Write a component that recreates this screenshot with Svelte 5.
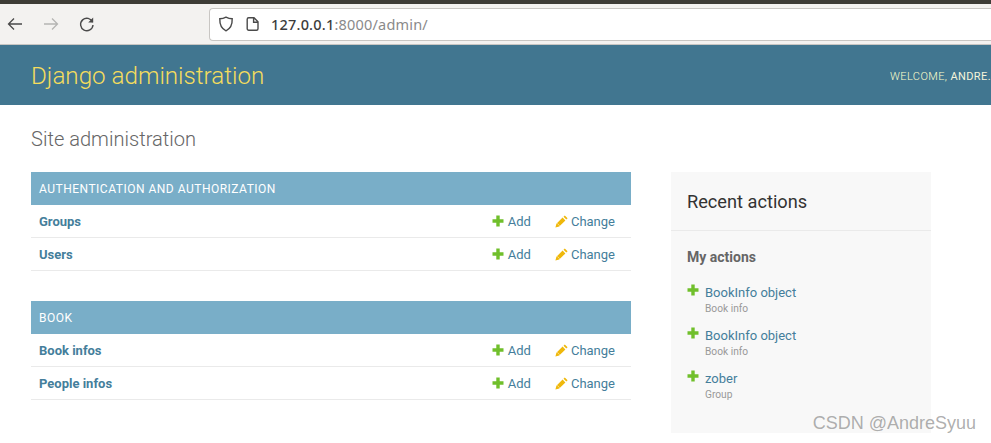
<script>
	const sections = [
		{ title: 'Authentication and Authorization', rows: ['Groups', 'Users'] },
		{ title: 'Book', rows: ['Book infos', 'People infos'] }
	];
	const actions = [
		{ name: 'BookInfo object', type: 'Book info' },
		{ name: 'BookInfo object', type: 'Book info' },
		{ name: 'zober', type: 'Group' }
	];
</script>

{#snippet plus()}
	<svg class="icon" width="12" height="12" viewBox="0 0 12 12">
		<path d="M4.300 0.500h3.400v3.800h3.800v3.400H7.700v3.800H4.300V7.700H0.500V4.300h3.800z" fill="#70bf2b" />
	</svg>
{/snippet}

{#snippet pencil()}
	<svg class="icon" width="13" height="13" viewBox="0 0 13 13">
		<path d="M9.800 0.400l2.800 2.800-1.300 1.300-2.800-2.800zM7.600 2.600l2.800 2.800-6.200 6.200-3.800 1 1-3.800z" fill="#efb80b" />
		<path d="M2.200 8.300l2.500 2.500" stroke="#fff" stroke-width="0.500" />
	</svg>
{/snippet}

<div class="page">
	<div class="topstrip"></div>
	<div class="toolbar">
		<div class="navs">
			<svg width="18" height="18" viewBox="0 0 18 18" fill="none" stroke="#4a4a4a" stroke-width="1.3">
				<path d="M16 9H2.500M8 3.500L2.500 9 8 14.500" />
			</svg>
			<svg width="18" height="18" viewBox="0 0 18 18" fill="none" stroke="#b5b5b3" stroke-width="1.3">
				<path d="M2 9h13.500M10 3.500L15.500 9 10 14.500" />
			</svg>
			<svg width="18" height="18" viewBox="0 0 18 18" fill="none" stroke="#4a4a4a" stroke-width="1.4">
				<path d="M14.600 7.200A6.200 6.200 0 1 0 15 10" />
				<path d="M15.200 2.600v5h-5z" fill="#4a4a4a" stroke="none" />
			</svg>
		</div>
		<div class="urlbar">
			<svg width="16" height="16" viewBox="0 0 16 16" fill="none" stroke="#4a4a4a" stroke-width="1.4">
				<path d="M8 1.200c2 1.100 4 1.600 6.200 1.600C14.400 8.600 12.400 12.800 8 14.800 3.600 12.800 1.600 8.600 1.800 2.800 4 2.800 6 2.300 8 1.200z" />
			</svg>
			<svg class="doc" width="14" height="16" viewBox="0 0 14 16" fill="none" stroke="#4a4a4a" stroke-width="1.4">
				<path d="M2.700 1.700h5.300l4 4v7.100a1.500 1.500 0 0 1-1.500 1.500H2.700a1.500 1.500 0 0 1-1.500-1.500V3.200a1.500 1.500 0 0 1 1.500-1.500zM7.600 1.700v4.500h4.400" />
			</svg>
			<span class="url"><b>127.0.0.1</b>:8000/admin/</span>
		</div>
	</div>

	<header>
		<div class="brand">Django administration</div>
		<div class="tools">WELCOME, <strong>ANDRE.</strong></div>
	</header>

	<main>
		<h1>Site administration</h1>
		<div class="columns">
			<div class="apps">
				{#each sections as section}
					<section>
						<h2>{section.title}</h2>
						{#each section.rows as row}
							<div class="row">
								<a class="model" href="#top">{row}</a>
								<a class="add" href="#top">{@render plus()}Add</a>
								<a class="change" href="#top">{@render pencil()}Change</a>
							</div>
						{/each}
					</section>
				{/each}
			</div>
			<aside>
				<h3>Recent actions</h3>
				<div class="mine">
					<h4>My actions</h4>
					<ul>
						{#each actions as action}
							<li>
								{@render plus()}
								<div>
									<a href="#top">{action.name}</a>
									<small>{action.type}</small>
								</div>
							</li>
						{/each}
					</ul>
				</div>
			</aside>
		</div>
	</main>

	<div class="watermark">CSDN @AndreSyuu</div>
</div>

<style>
	:global(body) {
		margin: 0;
		background: #fff;
	}
	.page {
		position: relative;
		width: 991px;
		height: 443px;
		overflow: hidden;
		font-family: Roboto, 'Liberation Sans', sans-serif;
		font-size: 13px;
		color: #333;
	}
	.topstrip {
		height: 4px;
		background: #3d3c36;
	}
	.toolbar {
		display: flex;
		align-items: center;
		height: 40px;
		background: #f3f2f0;
		border-bottom: 1px solid #c8c6c3;
	}
	.navs {
		display: flex;
		align-items: center;
		gap: 18px;
		padding-left: 6px;
		width: 203px;
	}
	.urlbar {
		display: flex;
		align-items: center;
		flex: 1;
		height: 31px;
		padding-left: 8px;
		background: #fff;
		border: 1px solid #c8c6c3;
		border-right: none;
		border-radius: 4px 0 0 4px;
	}
	.doc {
		margin-left: 12px;
	}
	.url {
		margin-left: 11px;
		font-family: 'Noto Sans', 'Open Sans', sans-serif;
		font-size: 14.500px;
		letter-spacing: 0.2px;
		color: #8a8a8a;
	}
	.url b {
		font-weight: 500;
		color: #3c3c3c;
	}
	header {
		display: flex;
		align-items: center;
		justify-content: space-between;
		height: 60px;
		padding: 2px 0 0 31px;
		box-sizing: border-box;
		background: #417690;
		white-space: nowrap;
	}
	.brand {
		font-size: 24.200px;
		font-weight: 300;
		color: #f5dd5d;
	}
	.tools {
		font-size: 11px;
		font-weight: 300;
		letter-spacing: 0.4px;
		color: #ffc;
	}
	.tools strong {
		font-weight: 400;
		color: #f5f5dc;
	}
	main {
		padding: 21px 60px 0 31px;
	}
	h1 {
		margin: 0 0 19px;
		font-size: 20.100px;
		font-weight: 300;
		line-height: 27px;
		color: #666;
	}
	.columns {
		display: flex;
		justify-content: space-between;
		align-items: flex-start;
	}
	.apps {
		width: 600px;
	}
	section {
		margin-bottom: 30px;
	}
	h2 {
		margin: 0;
		height: 33px;
		padding: 0 8px;
		line-height: 35px;
		font-size: 12px;
		font-weight: 400;
		letter-spacing: 0.5px;
		text-transform: uppercase;
		color: #fff;
		background: #79aec8;
	}
	.row {
		display: flex;
		align-items: center;
		height: 32px;
		padding: 0 16px 0 8px;
		border-bottom: 1px solid #eaeaea;
	}
	a {
		color: #447e9b;
		text-decoration: none;
	}
	.model {
		flex: 1;
		font-weight: 700;
	}
	.add {
		display: flex;
		align-items: center;
		gap: 3.500px;
		margin-right: 24px;
	}
	.change {
		display: flex;
		align-items: center;
		gap: 3px;
	}
	.icon {
		flex: none;
	}
	aside {
		width: 260px;
		height: 261px;
		background: #f8f8f8;
	}
	h3 {
		margin: 0;
		height: 58px;
		padding: 0 16px;
		line-height: 60px;
		font-size: 18.200px;
		font-weight: 400;
		color: #333;
		border-bottom: 1px solid #eaeaea;
	}
	.mine {
		padding: 0 16px;
	}
	h4 {
		margin: 18px 0 0;
		font-size: 14px;
		line-height: 17px;
		font-weight: 700;
		color: #666;
	}
	ul {
		list-style: none;
		margin: 19px 0 0;
		padding: 0;
	}
	li {
		display: flex;
		gap: 6px;
		height: 43px;
		line-height: 16px;
	}
	li .icon {
		margin-top: -1px;
	}
	small {
		display: block;
		margin-top: 1px;
		font-size: 10.200px;
		line-height: 14px;
		color: #999;
	}
	.watermark {
		position: absolute;
		right: 15px;
		bottom: 9px;
		font-family: 'Liberation Sans', Arial, sans-serif;
		font-size: 18px;
		color: rgba(130, 130, 130, 0.65);
	}
</style>
